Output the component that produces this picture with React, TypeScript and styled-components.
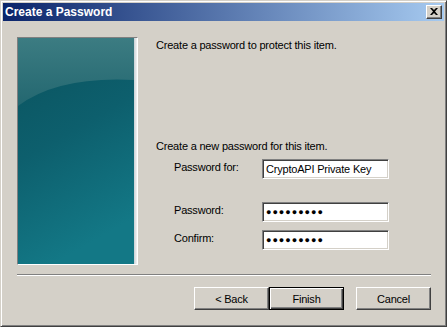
import React from 'react';
import styled, { createGlobalStyle } from 'styled-components';

const GlobalStyle = createGlobalStyle`
  html, body {
    margin: 0;
    padding: 0;
    background: #d4d0c8;
  }
  body {
    font-family: 'Liberation Sans', Arial, sans-serif;
    font-size: 11px;
    letter-spacing: -0.2px;
    color: #000;
  }
`;

const Window = styled.div`
  box-sizing: border-box;
  width: 447px;
  height: 327px;
  display: flex;
  flex-direction: column;
  padding: 2px;
  background: #d4d0c8;
  border: 1px solid;
  border-color: #d4d0c8 #404040 #404040 #d4d0c8;
  box-shadow: inset 1px 1px #fff, inset -1px -1px #808080;
`;

const TitleBar = styled.div`
  height: 18px;
  display: flex;
  align-items: center;
  justify-content: space-between;
  padding: 0 2px 0 2px;
  background: linear-gradient(to right, #0a246a, #a6caf0);
  color: #fff;
  font-weight: bold;
  font-size: 12px;
  letter-spacing: 0;
`;

const CloseButton = styled.div`
  box-sizing: border-box;
  width: 16px;
  height: 14px;
  display: flex;
  align-items: center;
  justify-content: center;
  background: #d4d0c8;
  border: 1px solid;
  border-color: #fff #404040 #404040 #fff;
  box-shadow: inset -1px -1px #808080;

  & svg {
    width: 8px;
    height: 7px;
    margin-bottom: 1px;
  }
`;

const Body = styled.div`
  flex: 1;
  display: flex;
  flex-direction: column;
  padding: 16px 13px 0 14px;
`;

const TopRow = styled.div`
  display: flex;
`;

const Picture = styled.div`
  box-sizing: border-box;
  width: 121px;
  height: 228px;
  border: 1px solid;
  border-color: #808080 #fff #fff #808080;

  & svg {
    display: block;
  }
`;

const Content = styled.div`
  display: flex;
  flex-direction: column;
  margin-left: 18px;
`;

const Text = styled.div<{ $top: number }>`
  margin-top: ${(p) => p.$top}px;
  line-height: 13px;
  white-space: nowrap;
`;

const FormGrid = styled.div`
  display: grid;
  grid-template-columns: 88px 127px;
  margin: 6px 0 0 18px;
`;

const Label = styled.div<{ $top: number }>`
  margin-top: ${(p) => p.$top}px;
  padding-top: 2px;
  line-height: 13px;
`;

const Field = styled.div<{ $top: number; $dots?: boolean }>`
  box-sizing: border-box;
  margin-top: ${(p) => p.$top}px;
  height: 20px;
  padding: 0 3px;
  display: flex;
  align-items: center;
  background: #fff;
  border: 1px solid;
  border-color: #808080 #fff #fff #808080;
  box-shadow: inset 1px 1px #404040, inset -1px -1px #d4d0c8;
  white-space: nowrap;
  overflow: hidden;
  font-size: ${(p) => (p.$dots ? '9px' : '11px')};
  letter-spacing: ${(p) => (p.$dots ? '1px' : '-0.2px')};
`;

const Separator = styled.div`
  margin-top: 9px;
  border-top: 1px solid #808080;
  border-bottom: 1px solid #fff;
`;

const ButtonRow = styled.div`
  display: flex;
  justify-content: flex-end;
  margin-top: 11px;
`;

const Button = styled.div<{ $default?: boolean; $gap?: number }>`
  box-sizing: border-box;
  width: 75px;
  height: 23px;
  margin-left: ${(p) => p.$gap ?? 0}px;
  display: flex;
  align-items: center;
  justify-content: center;
  background: #d4d0c8;
  border: 1px solid;
  border-color: ${(p) => (p.$default ? '#000' : '#fff #404040 #404040 #fff')};
  box-shadow: ${(p) =>
    p.$default
      ? 'inset 1px 1px #fff, inset -1px -1px #404040, inset -2px -2px #808080'
      : 'inset -1px -1px #808080'};
`;

const PictureArt: React.FC = () => (
  <svg width="119" height="226" viewBox="0 0 119 226">
    <defs>
      <linearGradient id="base" x1="0" y1="0" x2="0.3" y2="1">
        <stop offset="0" stopColor="#0a525d" />
        <stop offset="0.5" stopColor="#0d5f6d" />
        <stop offset="1" stopColor="#137886" />
      </linearGradient>
      <linearGradient id="gloss" x1="0" y1="0" x2="0" y2="1">
        <stop offset="0" stopColor="#3c7c82" />
        <stop offset="1" stopColor="#236770" />
      </linearGradient>
      <linearGradient id="edge" x1="0" y1="0" x2="1" y2="0">
        <stop offset="0" stopColor="#c8d0d4" />
        <stop offset="1" stopColor="#f4f4f4" />
      </linearGradient>
    </defs>
    <rect x="0" y="0" width="119" height="226" fill="url(#base)" />
    <path d="M0 0 H116 V42 Q40 38 0 68 Z" fill="url(#gloss)" />
    <rect x="116" y="0" width="3" height="226" fill="url(#edge)" />
  </svg>
);

const App: React.FC = () => {
  return (
    <>
      <GlobalStyle />
      <Window>
        <TitleBar>
          <span>Create a Password</span>
          <CloseButton>
            <svg viewBox="0 0 8 7">
              <path d="M0 0h2l2 2 2-2h2L5 3.5 8 7H6L4 5 2 7H0l3-3.5z" fill="#000" />
            </svg>
          </CloseButton>
        </TitleBar>
        <Body>
          <TopRow>
            <Picture>
              <PictureArt />
            </Picture>
            <Content>
              <Text $top={2}>Create a password to protect this item.</Text>
              <Text $top={88}>Create a new password for this item.</Text>
              <FormGrid>
                <Label $top={0}>Password for:</Label>
                <Field $top={0}>CryptoAPI Private Key</Field>
                <Label $top={23}>Password:</Label>
                <Field $top={23} $dots>●●●●●●●●●</Field>
                <Label $top={8}>Confirm:</Label>
                <Field $top={8} $dots>●●●●●●●●●</Field>
              </FormGrid>
            </Content>
          </TopRow>
          <Separator />
          <ButtonRow>
            <Button>&lt; Back</Button>
            <Button $default>Finish</Button>
            <Button $gap={12}>Cancel</Button>
          </ButtonRow>
        </Body>
      </Window>
    </>
  );
};

export default App;
